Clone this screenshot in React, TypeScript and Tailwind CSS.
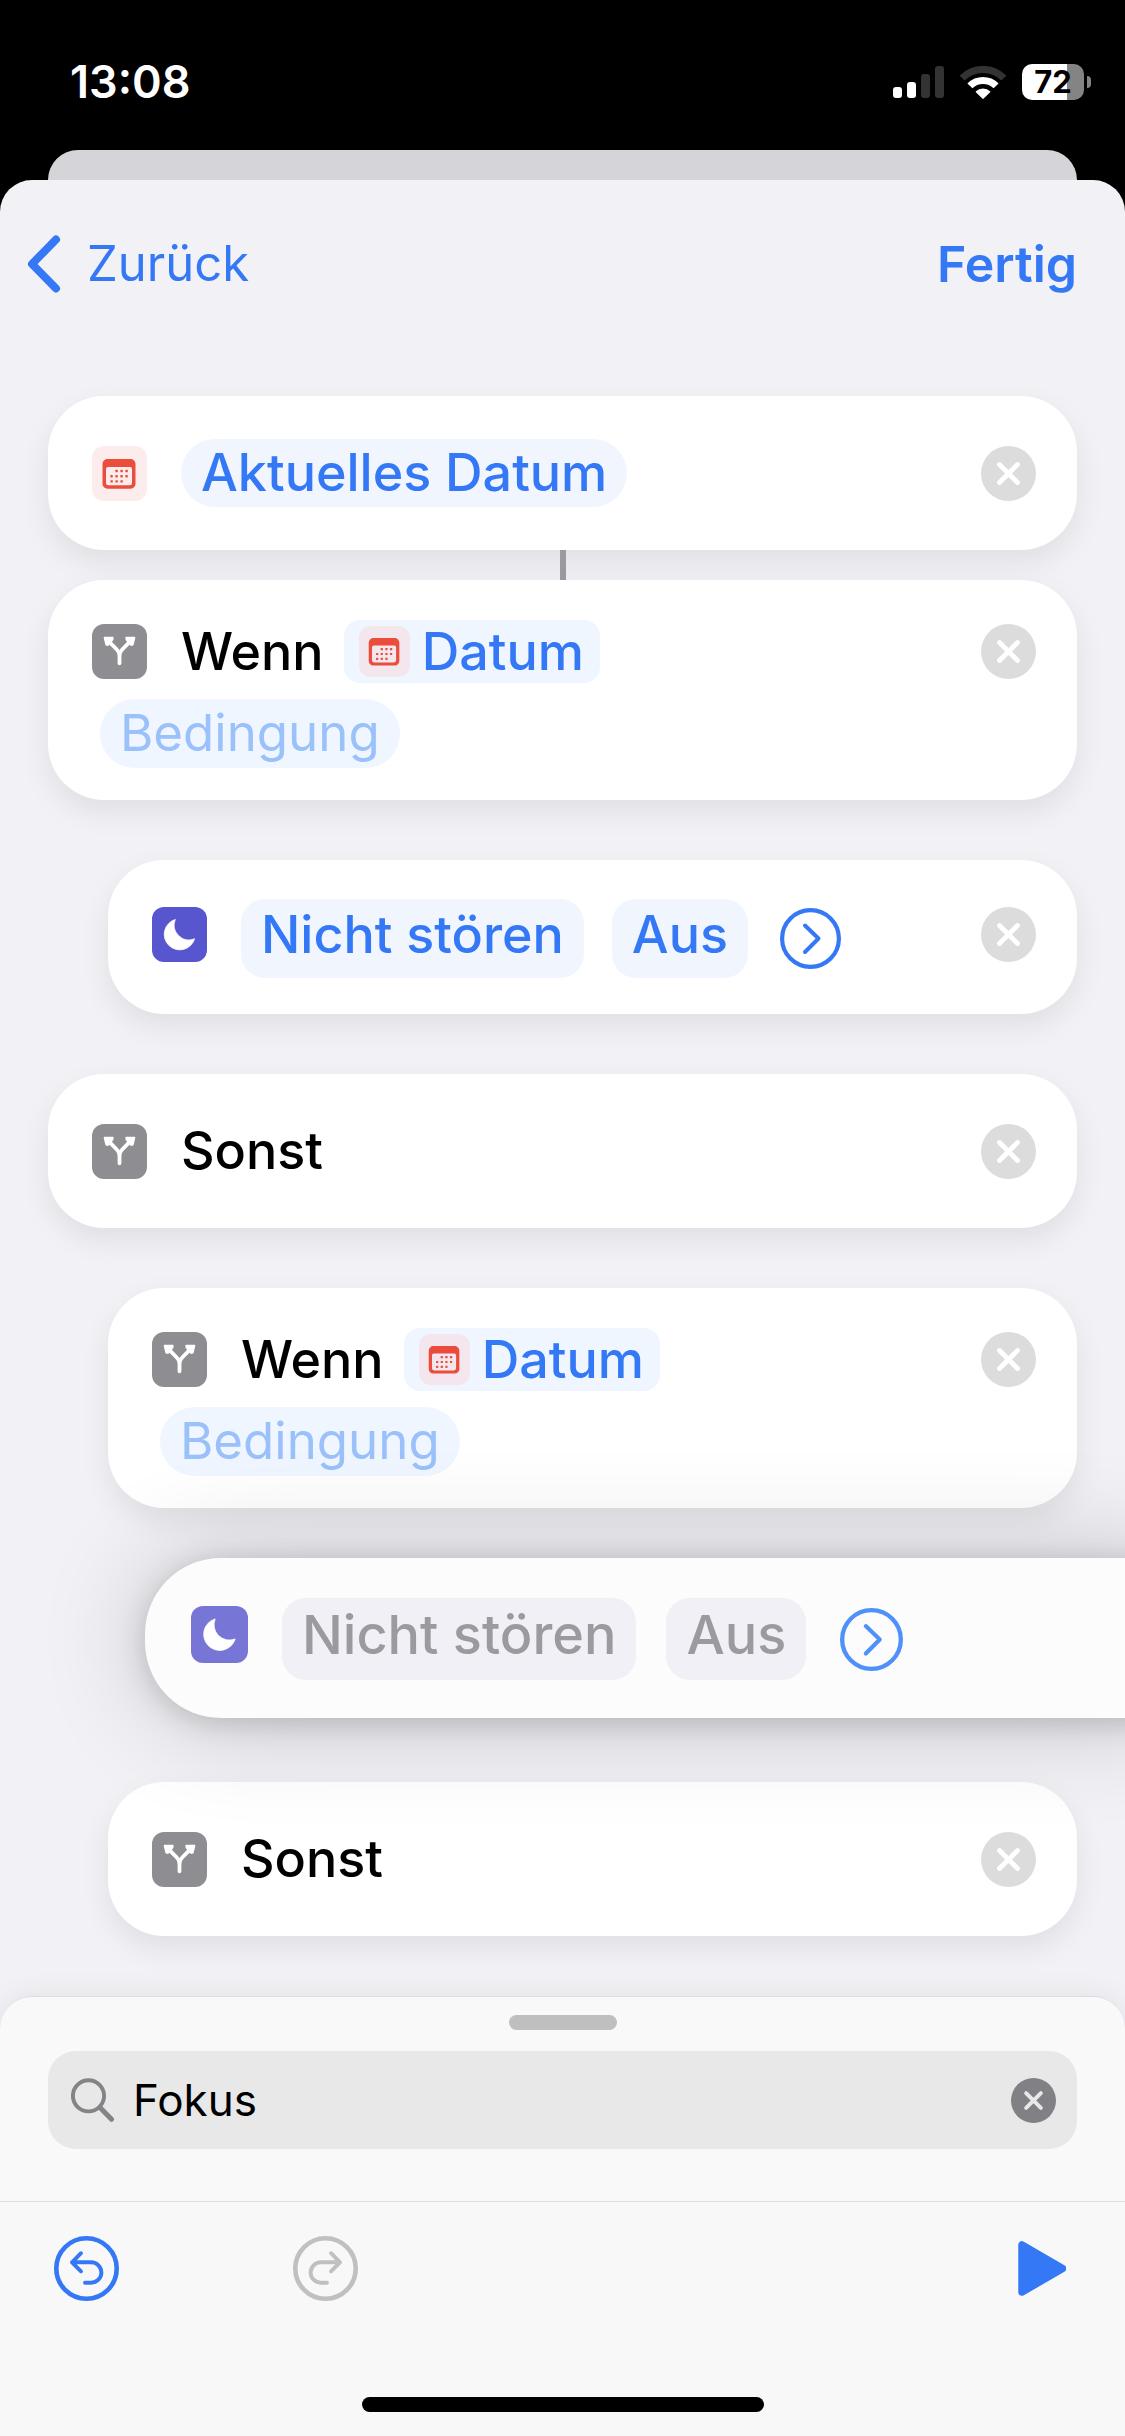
import { useState, type ReactNode } from "react";
import clsx from "clsx";

/* ---------- Icons ---------- */

function CalendarIcon({ className }: { className?: string }) {
  const dots = [
    [24.6, 25], [29.6, 25], [34.6, 25],
    [19.6, 30.2], [24.6, 30.2], [29.6, 30.2], [34.6, 30.2],
    [19.6, 35.4], [24.6, 35.4], [29.6, 35.4],
  ];
  return (
    <svg viewBox="0 0 55 55" className={className} aria-hidden="true">
      <path
        fillRule="evenodd"
        fill="#eb4d3d"
        d="M15.5 13h23a5 5 0 0 1 5 5v19.700a5 5 0 0 1-5 5h-23a5 5 0 0 1-5-5V18a5 5 0 0 1 5-5zM16 21a2 2 0 0 0-2 2v14a2.300 2.300 0 0 0 2.300 2.300h21.400A2.300 2.300 0 0 0 40 37V23a2 2 0 0 0-2-2z"
      />
      {dots.map(([x, y]) => (
        <rect key={`${x}-${y}`} x={x - 1.2} y={y - 1.2} width="2.4" height="2.4" rx="0.4" fill="#eb4d3d" />
      ))}
    </svg>
  );
}

function BranchIcon() {
  return (
    <svg viewBox="0 0 55 55" className="size-full" aria-hidden="true">
      <g fill="none" stroke="#fff" strokeWidth="3.8" strokeLinecap="round" strokeLinejoin="round">
        <path d="M27.500 39.300V31C27.500 26 22 23.500 17.500 18" />
        <path d="M27.500 31C27.500 26 33 23.500 37.500 18" />
      </g>
      <g fill="#fff" stroke="#fff" strokeWidth="1.8" strokeLinejoin="round">
        <path d="M12.600 13.700H20.800L20.500 15.600 16 21 14.200 20.600z" />
        <path d="M42.400 13.700H34.200L34.500 15.600 39 21 40.800 20.600z" />
      </g>
    </svg>
  );
}

function MoonIcon() {
  return (
    <svg viewBox="0 0 55 55" className="size-full" aria-hidden="true">
      <path
        d="M23.300 12.500A15.500 15.500 0 1 0 42.600 31.800A14.800 14.800 0 0 1 23.300 12.500z"
        fill="#fff"
        stroke="#fff"
        strokeWidth="0.8"
        strokeLinejoin="round"
      />
    </svg>
  );
}

function ChevronCircle({ className }: { className?: string }) {
  return (
    <svg viewBox="0 0 61 61" className={className} fill="none" stroke="currentColor" aria-hidden="true">
      <circle cx="30.5" cy="30.5" r="28.400" strokeWidth="4.200" />
      <path d="M25 17.500 38.500 30.500 25 44" strokeWidth="4" strokeLinecap="round" strokeLinejoin="round" />
    </svg>
  );
}

function CrossIcon({ className }: { className?: string }) {
  return (
    <svg viewBox="0 0 55 55" className={className} aria-hidden="true">
      <path d="M18.500 18.500l18 18m0-18l-18 18" stroke="currentColor" strokeWidth="4.800" strokeLinecap="round" />
    </svg>
  );
}

function UndoIcon({ flip }: { flip?: boolean }) {
  return (
    <svg
      viewBox="0 0 65 65"
      className={clsx("size-[65px]", flip && "-scale-x-100")}
      fill="none"
      stroke="currentColor"
      strokeLinecap="round"
      strokeLinejoin="round"
      aria-hidden="true"
    >
      <circle cx="32.5" cy="32.5" r="30.200" strokeWidth="4.600" />
      <path d="M27 17.200 18 26.300l9 9M18 26.300h19.200a10.200 10.200 0 0 1 0 20.400H31" strokeWidth="3.900" />
    </svg>
  );
}

/* ---------- Building blocks ---------- */

type TileKind = "calendar" | "branch" | "moon";

const TILE_COLORS: Record<TileKind, string> = {
  calendar: "bg-[#fceceb]",
  branch: "bg-[#8e8d92]",
  moon: "bg-[#5756ce]",
};

function Tile({ kind, className }: { kind: TileKind; className?: string }) {
  return (
    <span className={clsx("size-[55px] shrink-0 rounded-xl", TILE_COLORS[kind], className)}>
      {kind === "calendar" && <CalendarIcon className="size-full" />}
      {kind === "branch" && <BranchIcon />}
      {kind === "moon" && <MoonIcon />}
    </span>
  );
}

function RemoveButton({ className }: { className?: string }) {
  return (
    <button
      type="button"
      aria-label="Entfernen"
      className={clsx("ml-auto size-[55px] shrink-0 rounded-full bg-[#dcdcdc] text-white", className)}
    >
      <CrossIcon className="size-full" />
    </button>
  );
}

function Card({ className, children }: { className?: string; children: ReactNode }) {
  return (
    <section
      className={clsx(
        "rounded-[56px] bg-white pl-11 pr-[41px] text-[52px] font-medium shadow-[0_12px_30px_rgba(0,0,0,0.08)]",
        className
      )}
    >
      {children}
    </section>
  );
}

function ElseCard({ className }: { className?: string }) {
  return (
    <Card className={clsx("flex h-[154px] items-center", className)}>
      <Tile kind="branch" />
      <span className="ml-[34px]">Sonst</span>
      <RemoveButton />
    </Card>
  );
}

function IfCard({ className }: { className?: string }) {
  return (
    <Card className={clsx("pt-10 pb-8", className)}>
      <div className="flex h-[63px] items-center">
        <Tile kind="branch" />
        <span className="ml-[34px]">Wenn</span>
        <button
          type="button"
          className="ml-5 flex h-[63px] items-center gap-3 rounded-2xl bg-[#f0f6ff] pl-[15px] pr-4 text-[#3478f6]"
        >
          <span className="size-[51px] rounded-xl bg-[#f3e6ec]">
            <CalendarIcon className="size-full" />
          </span>
          Datum
        </button>
        <RemoveButton />
      </div>
      <button
        type="button"
        className="mt-4 ml-2 flex h-[69px] items-center rounded-full bg-[#f0f6ff] px-5 text-[51px] font-normal text-[#9ac1fa]"
      >
        Bedingung
      </button>
    </Card>
  );
}

function StatusBar() {
  return (
    <div className="flex h-[150px] items-center justify-between pt-3.5 pr-[34px] pl-[70px] text-white">
      <span className="text-[45px] font-semibold">13:08</span>
      <div className="flex items-center gap-4">
        <svg viewBox="0 0 51 32" className="h-8 w-[51px]" aria-hidden="true">
          <rect x="0" y="21" width="9" height="11" rx="3" fill="#fff" />
          <rect x="14" y="16" width="9" height="16" rx="3" fill="#fff" />
          <rect x="28" y="8" width="9" height="24" rx="3" fill="#333" />
          <rect x="42" y="0" width="9" height="32" rx="3" fill="#333" />
        </svg>
        <svg viewBox="0 0 46 33" className="h-[33px] w-[46px]" fill="none" strokeWidth="7" aria-hidden="true">
          <path d="M2.100 12.100a29.500 29.500 0 0 1 41.800 0" stroke="#333" />
          <path d="M9.900 19.900a18.500 18.500 0 0 1 26.200 0" stroke="#fff" />
          <path
            d="M16.300 25.800a9.500 9.500 0 0 1 13.400 0L23 32.300z"
            fill="#fff"
            stroke="#fff"
            strokeWidth="1.2"
            strokeLinejoin="round"
          />
        </svg>
        <div className="flex items-center gap-[3px]">
          <div className="flex h-9 w-[62px] items-center justify-center rounded-[10px] bg-linear-to-r from-white from-72% to-[#848484] to-72% text-[31px] font-bold text-black">
            72
          </div>
          <div className="h-3 w-1 rounded-r-full bg-[#848484]" />
        </div>
      </div>
    </div>
  );
}

export default function App() {
  const [query, setQuery] = useState("Fokus");

  return (
    <div className="flex min-h-screen flex-col overflow-hidden bg-black font-['Inter',sans-serif]">
      <StatusBar />
      <div className="mx-12 h-[30px] rounded-t-[30px] bg-[#d5d4d9]" />

      <div className="flex flex-1 flex-col rounded-t-[32px] bg-[#f2f1f6]">
        <header className="flex h-[168px] items-center justify-between pr-12 pl-[27px] text-[#3478f6]">
          <button type="button" className="flex items-center gap-[26px] text-[49px]">
            <svg viewBox="0 0 34 58" className="h-[58px] w-[34px]" aria-hidden="true">
              <path
                d="M29 4.500 5 29l24 24.500"
                fill="none"
                stroke="currentColor"
                strokeWidth="8"
                strokeLinecap="round"
                strokeLinejoin="round"
              />
            </svg>
            Zurück
          </button>
          <button type="button" className="text-[50px] font-semibold">Fertig</button>
        </header>

        {/* Actions */}
        <main className="flex flex-1 flex-col px-12 pt-12 pb-[60px]">
          <Card className="flex h-[154px] items-center">
            <Tile kind="calendar" />
            <button
              type="button"
              className="ml-[34px] flex h-[68px] items-center rounded-full bg-[#f0f5fe] px-5 text-[#3478f6]"
            >
              Aktuelles Datum
            </button>
            <RemoveButton />
          </Card>
          <div className="h-[30px] w-1.5 self-center bg-[#9a9aa0]" />
          <IfCard />

          <Card className="mt-[60px] ml-[60px] flex h-[154px] items-start pt-[39px]">
            <Tile kind="moon" className="mt-2" />
            <div className="ml-[34px] flex items-center gap-7 text-[#3478f6]">
              <button type="button" className="h-[79px] rounded-3xl bg-[#f0f5fe] px-5 pb-2 leading-none">
                Nicht stören
              </button>
              <button type="button" className="h-[79px] rounded-3xl bg-[#f0f5fe] px-5 pb-2 leading-none">
                Aus
              </button>
              <button type="button" aria-label="Mehr anzeigen" className="ml-1">
                <ChevronCircle className="size-[61px]" />
              </button>
            </div>
            <RemoveButton className="mt-2" />
          </Card>

          <ElseCard className="mt-[60px]" />
          <IfCard className="mt-[60px] ml-[60px]" />

          {/* Empty slot with the lifted action floating above it */}
          <div className="relative z-10 my-[60px] ml-[60px] h-[154px]">
            <section className="absolute -top-2.5 -right-32 left-[37px] flex h-[160px] items-start rounded-[76px] bg-[#fcfcfc] pt-10 pl-[46px] text-[54px] font-medium shadow-[0_0_110px_rgba(0,0,0,0.2),0_5px_28px_rgba(0,0,0,0.16)]">
              <span className="mt-2 size-[57px] shrink-0 rounded-xl bg-[#7775d5]">
                <MoonIcon />
              </span>
              <div className="ml-[34px] flex items-center gap-[30px] text-[#9b9a9f]">
                <button type="button" className="h-[82px] rounded-3xl bg-[#f1f0f6] px-5 pb-2 leading-none">
                  Nicht stören
                </button>
                <button type="button" className="h-[82px] rounded-3xl bg-[#f1f0f6] px-5 pb-2 leading-none">
                  Aus
                </button>
                <button type="button" aria-label="Mehr anzeigen" className="ml-1 text-[#4f91f8]">
                  <ChevronCircle className="size-[63px]" />
                </button>
              </div>
            </section>
          </div>

          <ElseCard className="ml-[60px]" />
        </main>

        {/* Bottom sheet */}
        <footer className="relative z-20 flex flex-col rounded-t-[32px] border-t border-[#dddce0] bg-[#f9f9f9] shadow-[0_0_30px_rgba(0,0,0,0.07)]">
          <div className="mt-[18px] h-[15px] w-[108px] self-center rounded-full bg-[#bfbfbf]" />
          <div className="mx-12 mt-[21px] flex h-[98px] items-center rounded-[28px] bg-[#e8e8e8] pr-[21px] pl-[23px]">
            <svg
              viewBox="0 0 44 44"
              className="size-11 shrink-0 text-[#838388]"
              fill="none"
              stroke="currentColor"
              strokeLinecap="round"
              aria-hidden="true"
            >
              <circle cx="17.5" cy="17.8" r="15.600" strokeWidth="3.900" />
              <path d="M29 29.500 40.500 41.300" strokeWidth="5" />
            </svg>
            <input
              type="text"
              aria-label="Suchen"
              value={query}
              onChange={(e) => setQuery(e.target.value)}
              className="ml-[18px] min-w-0 flex-1 bg-transparent text-[44px] text-black outline-none"
            />
            <button
              type="button"
              aria-label="Text löschen"
              onClick={() => setQuery("")}
              className="size-[45px] shrink-0 rounded-full bg-[#808085] text-[#e8e8e8]"
            >
              <CrossIcon className="size-full" />
            </button>
          </div>

          <div className="mt-[52px] flex h-[133px] items-center border-t border-[#dcdcde] bg-[#f8f8f8] pr-[59px] pl-[54px]">
            <button type="button" aria-label="Widerrufen" className="text-[#3478f6]">
              <UndoIcon />
            </button>
            <button type="button" aria-label="Wiederholen" disabled className="ml-[174px] text-[#c0c0c0]">
              <UndoIcon flip />
            </button>
            <button type="button" aria-label="Ausführen" className="ml-auto text-[#3478f6]">
              <svg viewBox="0 0 48 55" className="h-[55px] w-12" aria-hidden="true">
                <path
                  d="M4 4v47L44.500 27.500z"
                  fill="currentColor"
                  stroke="currentColor"
                  strokeWidth="7.500"
                  strokeLinejoin="round"
                />
              </svg>
            </button>
          </div>
          <div className="flex justify-center bg-[#f8f8f8] pt-[63px] pb-6">
            <div className="h-[15px] w-[402px] rounded-full bg-black" />
          </div>
        </footer>
      </div>
    </div>
  );
}
